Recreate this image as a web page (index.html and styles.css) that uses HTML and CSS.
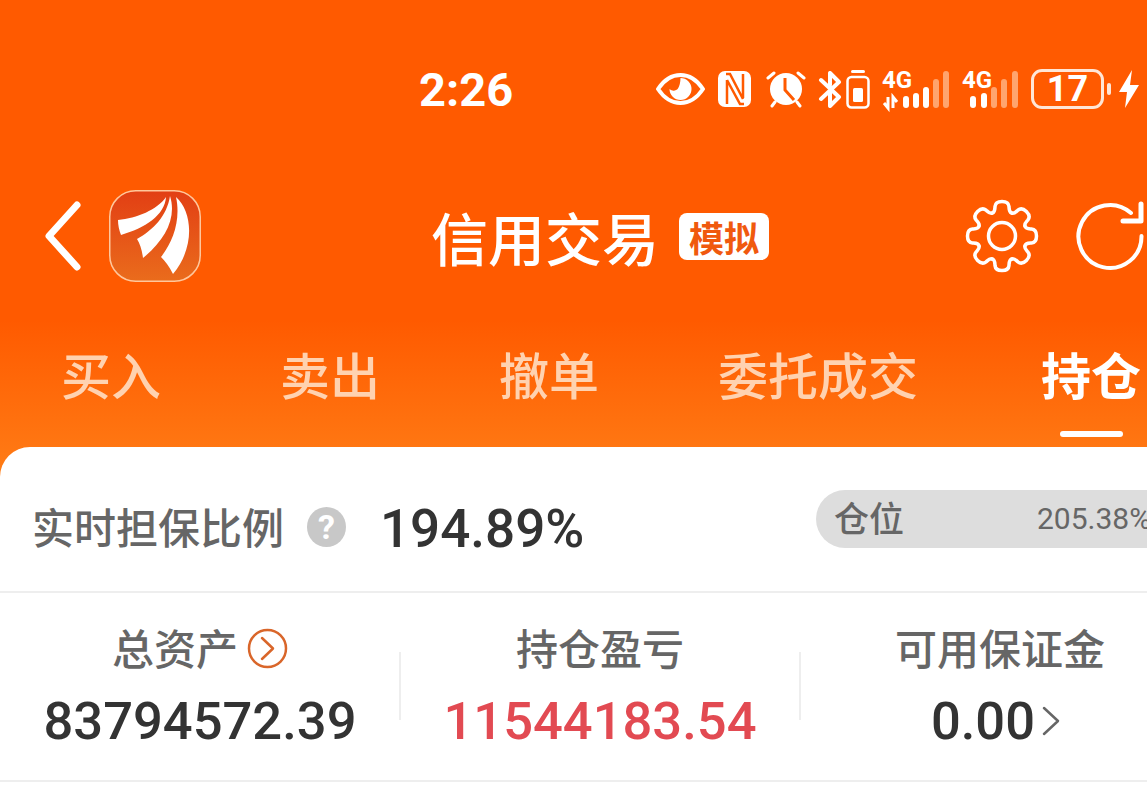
FILE: index.html
```html
<!DOCTYPE html>
<html>
<head>
  <title>信用交易</title>
  <link rel="stylesheet" href="styles.css">
</head>
<body>
  <div class="page">
    <div class="header">
      <div class="status-bar">
        <div class="time">2:26</div>
        <div class="status-icons">
          <svg class="ic-eye" width="49" height="36" viewBox="0 0 49 36">
            <path d="M2 18C8 9 16 4 24.500 4S41 9 47 18C41 27 33 32 24.500 32S8 27 2 18Z" fill="none" stroke="#fff" stroke-width="4" stroke-linejoin="round"/>
            <path d="M24.500 7a11 11 0 1 1-11 11c3 2.500 6.500 2 8.500-.5 1.500-2 2.500-6.500 2.500-10.500Z" fill="#fff"/>
          </svg>
          <svg class="ic-nfc" width="33" height="36" viewBox="0 0 33 36">
            <rect width="33" height="36" rx="7" fill="#fff"/>
            <path d="M9 9V33M8 3H12L25 28M25 3V27M9 9 22 33H26" fill="none" stroke="#ff5a00" stroke-width="2.500"/>
          </svg>
          <svg class="ic-alarm" width="40" height="38" viewBox="0 0 40 38">
            <circle cx="20" cy="19" r="16" fill="#fff"/>
            <path d="M19 8V20L28 30" fill="none" stroke="#ff5a00" stroke-width="3"/>
            <path d="M2 8 8 3M38 8 32 3M9 32 6 36M31 32 34 36" fill="none" stroke="#fff" stroke-width="3" stroke-linecap="round"/>
          </svg>
          <svg class="ic-bt" width="24" height="37" viewBox="0 0 24 37">
            <path d="M3 9 21 26 12 35V21M3 28 21 11 12 2V14" fill="none" stroke="#fff" stroke-width="4" stroke-linecap="round" stroke-linejoin="round"/>
          </svg>
          <svg class="ic-saver" width="24" height="39" viewBox="0 0 24 39">
            <rect x="5" y="0" width="14" height="3" rx="1.500" fill="#fff"/>
            <rect x="1.500" y="7" width="21" height="30.500" rx="4" fill="none" stroke="#fff" stroke-width="2.500"/>
            <rect x="7" y="18" width="10" height="14" rx="1.500" fill="#fff"/>
          </svg>
          <svg class="ic-sig ic-sig1" width="68" height="38" viewBox="0 0 68 38">
            <text x="0" y="18" class="sig-text">4G</text>
            <path d="M6 27V38L2 33M11 38V27L15 32" fill="none" stroke="#fff" stroke-width="3"/>
            <rect x="21" y="26" width="6" height="12" rx="3" fill="#fff"/>
            <rect x="31" y="23" width="6" height="15" rx="3" fill="#fff"/>
            <rect x="41" y="17" width="6" height="21" rx="3" fill="#fff"/>
            <rect x="51" y="9" width="6" height="29" rx="3" fill="#ffa46e"/>
            <rect x="61" y="1" width="6" height="37" rx="3" fill="#ffa46e"/>
          </svg>
          <svg class="ic-sig ic-sig2" width="56" height="38" viewBox="0 0 56 38">
            <text x="0" y="18" class="sig-text">4G</text>
            <rect x="8" y="26" width="6" height="12" rx="3" fill="#fff"/>
            <rect x="19" y="23" width="6" height="15" rx="3" fill="#fff"/>
            <rect x="29" y="17" width="6" height="21" rx="3" fill="#ffa46e"/>
            <rect x="39" y="9" width="6" height="29" rx="3" fill="#ffa46e"/>
            <rect x="50" y="1" width="6" height="37" rx="3" fill="#ffa46e"/>
          </svg>
          <div class="battery"><span>17</span></div>
          <div class="battery-nub"></div>
          <svg class="ic-bolt" width="20" height="38" viewBox="0 0 20 38">
            <path d="M13 0 0 22H8L6 38 20 15H11Z" fill="#fff"/>
          </svg>
        </div>
      </div>

      <div class="title-bar">
        <svg class="back" width="44" height="70" viewBox="0 0 44 70">
          <path d="M37 4 9 35 37 66" fill="none" stroke="#fff" stroke-width="7" stroke-linecap="round" stroke-linejoin="round"/>
        </svg>
        <svg class="logo" width="92" height="92" viewBox="0 0 92 92">
          <defs>
            <linearGradient id="logoBg" x1="0" y1="0" x2="0" y2="1">
              <stop offset="0" stop-color="#e23f14"/>
              <stop offset="1" stop-color="#ea6c1c"/>
            </linearGradient>
          </defs>
          <rect x="0.750" y="0.750" width="90.500" height="90.500" rx="26" fill="url(#logoBg)" stroke="#ffc79c" stroke-width="1.500"/>
          <path d="M9 30C28 28 48 20 57 7 56 25 36 38 12 45 10 40 9 35 9 30Z" fill="#fff"/>
          <path d="M28 49C44 40 58 26 61 6 68 28 56 50 34 68 33 60 31 54 28 49Z" fill="#fff"/>
          <path d="M52 67C64 52 72 30 67 7 84 22 86 58 64 84 60 76 56 71 52 67Z" fill="#fff"/>
        </svg>
        <div class="title">
          <span class="title-text">信用交易</span>
          <span class="title-tag">模拟</span>
        </div>
        <svg class="gear" width="74" height="74" viewBox="0 0 74 74">
          <defs>
            <path id="gearTooth" d="M27.400 13.900C30 13.200 29.800 11 30 7.500 30.300 4 33 2.500 37 2.500S43.700 4 44 7.500C44.200 11 44 13.200 46.600 13.900" fill="none" stroke="#fff" stroke-width="3.500" stroke-linecap="round"/>
          </defs>
          <circle cx="37" cy="37" r="13.500" fill="none" stroke="#fff" stroke-width="3.500"/>
          <use href="#gearTooth"/>
          <use href="#gearTooth" transform="rotate(45 37 37)"/>
          <use href="#gearTooth" transform="rotate(90 37 37)"/>
          <use href="#gearTooth" transform="rotate(135 37 37)"/>
          <use href="#gearTooth" transform="rotate(180 37 37)"/>
          <use href="#gearTooth" transform="rotate(225 37 37)"/>
          <use href="#gearTooth" transform="rotate(270 37 37)"/>
          <use href="#gearTooth" transform="rotate(315 37 37)"/>
        </svg>
        <svg class="refresh" width="68" height="70" viewBox="0 0 68 70">
          <path d="M55 12A31.500 31.500 0 1 0 65.500 35" fill="none" stroke="#fff" stroke-width="4" stroke-linecap="round"/>
          <path d="M65 3V20H47" fill="none" stroke="#fff" stroke-width="5" stroke-linecap="round" stroke-linejoin="round"/>
        </svg>
      </div>

      <div class="tabs">
        <div class="tab">买入</div>
        <div class="tab">卖出</div>
        <div class="tab">撤单</div>
        <div class="tab">委托成交</div>
        <div class="tab active">持仓</div>
      </div>
    </div>

    <div class="card">
      <div class="ratio-row">
        <span class="ratio-label">实时担保比例</span>
        <span class="help">?</span>
        <span class="ratio-value">194.89%</span>
        <div class="position">
          <span class="position-label">仓位</span>
          <span class="position-value">205.38%</span>
        </div>
      </div>
      <div class="stats-row">
        <div class="stat">
          <div class="stat-label">总资产
            <svg class="circle-arrow" width="41" height="41" viewBox="0 0 41 41">
              <circle cx="20.500" cy="20.500" r="18.500" fill="none" stroke="#d9662a" stroke-width="2.500"/>
              <path d="M15 10 26 20.500 15 31" fill="none" stroke="#d9662a" stroke-width="2.500" stroke-linecap="round" stroke-linejoin="round"/>
            </svg>
          </div>
          <div class="stat-value">83794572.39</div>
        </div>
        <div class="stat divided">
          <div class="stat-label">持仓盈亏</div>
          <div class="stat-value red">11544183.54</div>
        </div>
        <div class="stat divided">
          <div class="stat-label">可用保证金</div>
          <div class="stat-value with-arrow">0.00
            <svg class="small-arrow" width="20" height="32" viewBox="0 0 20 32">
              <path d="M3 3 17 16 3 29" fill="none" stroke="#666" stroke-width="2.500" stroke-linecap="round" stroke-linejoin="round"/>
            </svg>
          </div>
        </div>
      </div>
    </div>
  </div>
</body>
</html>
```

FILE: styles.css
```css
html,
body {
  margin: 0;
  padding: 0;
}

body {
  font-family: "Noto Sans CJK SC", Roboto, sans-serif;
  background-color: #fff;
  overflow: hidden;
}

.page {
  width: 1147px;
  height: 804px;
  overflow: hidden;
  background-color: #fff;
}

.header {
  height: 477px;
  background: linear-gradient(#ff5a00 0, #ff5a00 320px, #ff7d16 477px);
}

.status-bar {
  display: flex;
  align-items: center;
  height: 68px;
  padding-top: 55px;
  padding-left: 419px;
}

.time {
  width: 237px;
  font-family: Roboto, sans-serif;
  font-size: 47px;
  font-weight: 700;
  color: #fff;
}

.status-icons {
  display: flex;
  align-items: center;
}

.ic-nfc { margin-left: 13px; }
.ic-alarm { margin-left: 15px; }
.ic-bt { margin-left: 12px; }
.ic-saver { margin-left: 4px; }
.ic-sig1 { margin-left: 12px; }
.ic-sig2 { margin-left: 12px; }
.ic-bolt { margin-left: 8px; }

.ic-sig {
  overflow: visible;
}

.sig-text {
  font-family: Roboto, sans-serif;
  font-size: 24px;
  font-weight: 700;
  fill: #fff;
}

.battery {
  display: flex;
  align-items: center;
  justify-content: center;
  width: 73px;
  height: 40px;
  margin-left: 13px;
  border: 3px solid #ffe6d6;
  border-radius: 11px;
  box-sizing: border-box;
  font-family: Roboto, sans-serif;
  font-size: 36px;
  font-weight: 700;
  color: #fff;
}

.battery-nub {
  width: 4px;
  height: 12px;
  margin-left: 3px;
  border-radius: 2px;
  background-color: #ffe6d6;
}

.title-bar {
  display: flex;
  align-items: center;
  height: 92px;
  margin-top: 67px;
  padding-left: 40px;
}

.logo {
  flex-shrink: 0;
  margin-left: 25px;
}

.title {
  flex-shrink: 0;
  display: flex;
  align-items: center;
  width: 533px;
  margin-left: 230px;
}

.title-text {
  font-size: 57px;
  font-weight: 500;
  line-height: 70px;
  color: #fff;
}

.title-tag {
  margin-left: 20px;
  padding: 0 10px;
  height: 47px;
  line-height: 47px;
  border-radius: 8px;
  background-color: #fff;
  font-size: 35px;
  font-weight: 700;
  color: #f0590e;
}

.gear {
  flex-shrink: 0;
  margin-left: 1px;
}

.refresh {
  flex-shrink: 0;
  margin-left: 37px;
}

.tabs {
  display: flex;
  align-items: center;
  gap: 119px;
  height: 70px;
  margin-top: 56px;
  padding-left: 61px;
  white-space: nowrap;
}

.tab {
  flex-shrink: 0;
  font-size: 50px;
  font-weight: 500;
  line-height: 70px;
  color: #ffd2b0;
}

.tab.active {
  position: relative;
  margin-left: 4px;
  font-weight: 700;
  color: #fff;
}

.tab.active::after {
  content: "";
  position: absolute;
  left: 19px;
  bottom: -29px;
  width: 63px;
  height: 6px;
  border-radius: 3px;
  background-color: #fff;
}

.card {
  position: relative;
  margin-top: -30px;
  border-radius: 30px 0 0 0;
  background-color: #fff;
}

.ratio-row {
  display: flex;
  align-items: center;
  height: 146px;
  padding-top: 16px;
  padding-left: 32px;
  border-bottom: 2px solid #eeeeee;
  box-sizing: border-box;
  white-space: nowrap;
}

.ratio-label {
  margin-top: -4px;
  font-size: 42px;
  font-weight: 500;
  color: #666;
}

.help {
  width: 40px;
  height: 40px;
  margin-left: 23px;
  border-radius: 50%;
  background-color: #c8c8c8;
  font-family: Roboto, sans-serif;
  font-size: 34px;
  font-weight: 700;
  line-height: 40px;
  text-align: center;
  color: #fff;
}

.ratio-value {
  flex-shrink: 0;
  width: 436px;
  margin-top: 4px;
  margin-left: 34px;
  font-family: Roboto, sans-serif;
  font-size: 53px;
  font-weight: 500;
  color: #333;
}

.position {
  flex-shrink: 0;
  display: flex;
  align-items: center;
  justify-content: space-between;
  width: 331px;
  height: 58px;
  margin-top: -16px;
  padding-left: 18px;
  border-radius: 29px 0 0 29px;
  background-color: #dddddd;
  box-sizing: border-box;
}

.position-label {
  margin-top: -6px;
  font-size: 35px;
  font-weight: 500;
  color: #666;
}

.position-value {
  width: 110px;
  margin-top: -2px;
  font-family: Roboto, sans-serif;
  font-size: 30px;
  color: #666;
}

.stats-row {
  display: flex;
  height: 189px;
  border-bottom: 2px solid #eeeeee;
  box-sizing: border-box;
}

.stat {
  flex-shrink: 0;
  position: relative;
  width: 400px;
  text-align: center;
}

.stat.divided::before {
  content: "";
  position: absolute;
  left: -1px;
  top: 59px;
  width: 2px;
  height: 68px;
  background-color: #eeeeee;
}

.stat-label {
  display: flex;
  align-items: center;
  justify-content: center;
  gap: 9px;
  height: 60px;
  margin-top: 23px;
  font-size: 42px;
  font-weight: 500;
  color: #666;
}

.circle-arrow {
  margin-top: 4px;
}

.stat-value {
  display: flex;
  align-items: center;
  justify-content: center;
  gap: 6px;
  height: 70px;
  margin-top: 10px;
  font-family: Roboto, sans-serif;
  font-size: 52.500px;
  font-weight: 500;
  color: #333;
}

.stat-value.red {
  color: #e24a52;
}

.stat-value.with-arrow {
  padding-right: 8px;
}
```
